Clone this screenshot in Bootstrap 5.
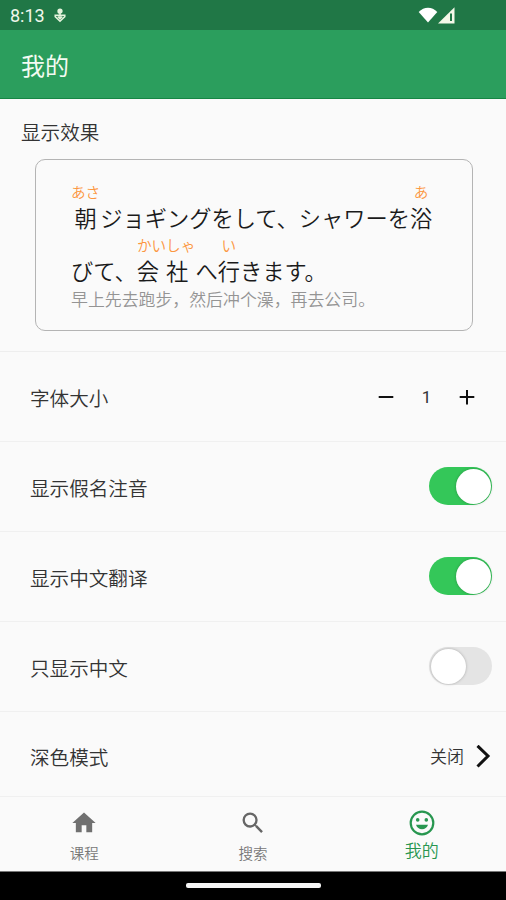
<!DOCTYPE html>
<html lang="zh-CN">
<head>
<meta charset="utf-8">
<meta name="viewport" content="width=device-width, initial-scale=1">
<title>我的</title>
<link href="https://cdn.jsdelivr.net/npm/bootstrap@5.3.0/dist/css/bootstrap.min.css" rel="stylesheet">
<style>
  body { background: #fafafa; color: #333; font-family: Roboto, "Noto Sans CJK SC", sans-serif; font-size: 19.6px; line-height: 1; font-weight: 350; overflow: hidden; }
  svg { display: block; flex: none; }
  .status { height: 30px; background: #207746; color: #f1f8ec; font-size: 18px; font-weight: 400; padding: 2px 49px 0 10px; }
  .appbar { height: 69px; background: #2b9e5d; border-bottom: 1px solid #168644; color: #f4fbf2; font-size: 24px; font-weight: 400; padding: 6px 21px 0; }
  .preview { height: 253px; padding: 25px 33px 0 21px; border-bottom: 1px solid #eee; }
  .sample { height: 172px; margin: 15px 0 0 14px; border: 1.5px solid #b4b4b4; border-radius: 10px; padding: 23px 0 0 35px; }
  .jp { font-family: "Noto Sans CJK JP", sans-serif; font-size: 22.25px; color: #1a1a1a; height: 52.7px; white-space: nowrap; }
  .kana { font-size: 14.6px; height: 15px; line-height: 15px; color: #fc9640; }
  .base { height: 36px; line-height: 36px; }
  .spread { letter-spacing: 7.2px; }
  .zh { font-size: 16.9px; color: #949494; line-height: 20px; margin-top: 2px; white-space: nowrap; }
  .setting { height: 90px; border-bottom: 1px solid #f0f0f0; padding: 2px 14px 0 30px; }
  .setting.last { height: 85px; padding-top: 5px; }
  .label { padding-top: 4px; }
  .stepper { padding-right: 17px; }
  .count { font-size: 17px; width: 65px; text-align: center; font-weight: 400; }
  .toggle { width: 63px; height: 38px; border-radius: 19px; background: #e4e4e4; padding: 1.5px; margin-top: -3px; }
  .toggle.on { background: #34c759; justify-content: end; }
  .knob { width: 35px; height: 35px; border-radius: 50%; background: #fff; box-shadow: 0 0 3px #0004; }
  .state { font-size: 17px; padding-top: 2px; }
  .tabs { height: 75px; color: #777; font-size: 14.5px; border-bottom: 1px solid #777; padding-top: 13px; }
  .tab-label { line-height: 18px; margin-top: 8px; padding-top: 3px; }
  .wide-icon { margin-top: -1px; margin-bottom: -2px; }
  .current { color: #27964f; }
  .current .tab-label { font-size: 17px; margin-top: 3px; }
  .gesture { height: 29px; background: #000; }
  .pill { width: 135px; height: 5px; border-radius: 2px; background: #f5f5f5; margin-top: -2px; }
</style>
<script src="https://cdn.jsdelivr.net/npm/bootstrap@5.3.0/dist/js/bootstrap.bundle.min.js"></script>
</head>
<body>
<div class="status d-flex align-items-center">
  <span>8:13</span>
  <svg class="ms-2" width="14" height="16" viewBox="0 0 14 16" fill="none" stroke="#e4f3dc" stroke-width="1.5"><circle cx="7" cy="3.2" r="1.9" fill="#e4f3dc"/><path d="M2.200 7.300h9.600v1.300L7 13.200 2.200 8.600zM7 5v5M4.800 8.500 7 10.700l2.200-2.200"/></svg>
  <svg class="ms-auto" width="39" height="18" viewBox="0 0 39 18" fill="#fff"><path d="M.7 5C6-.7 14-.7 19.300 5L10 15.500z"/><path fill="#f4f8e8" d="M20 16.500 36.500.2V16.500z"/><path d="M33 6.500V14" stroke="#207746" stroke-width="2"/></svg>
</div>
<header class="appbar d-flex align-items-center">我的</header>
<main>
  <section class="preview">
    <div>显示效果</div>
    <div class="sample">
      <div class="jp d-flex align-items-end" lang="ja">
        <div class="d-flex flex-column align-items-center"><span class="kana">あさ</span><span class="base">朝</span></div>
        <span class="base">ジョギングをして、シャワーを</span>
        <div class="d-flex flex-column align-items-center"><span class="kana">あ</span><span class="base">浴</span></div>
      </div>
      <div class="jp d-flex align-items-end" lang="ja">
        <span class="base">びて、</span>
        <div class="d-flex flex-column align-items-center"><span class="kana">かいしゃ</span><span class="base spread">会社</span></div>
        <span class="base">へ</span>
        <div class="d-flex flex-column align-items-center"><span class="kana">い</span><span class="base">行</span></div>
        <span class="base">きます。</span>
      </div>
      <div class="zh">早上先去跑步，然后冲个澡，再去公司。</div>
    </div>
  </section>
  <div class="setting d-flex align-items-center justify-content-between">
    <span class="label">字体大小</span>
    <div class="stepper d-flex align-items-center">
      <svg width="16" height="16" viewBox="0 0 16 16" stroke="#111" stroke-width="2"><path d="M.7 7h14.600"/></svg>
      <span class="count">1</span>
      <svg width="16" height="16" viewBox="0 0 16 16" stroke="#111" stroke-width="2"><path d="M.7 7h14.600M8 0v14.500"/></svg>
    </div>
  </div>
  <div class="setting d-flex align-items-center justify-content-between"><span class="label">显示假名注音</span><div class="toggle on d-flex"><div class="knob"></div></div></div>
  <div class="setting d-flex align-items-center justify-content-between"><span class="label">显示中文翻译</span><div class="toggle on d-flex"><div class="knob"></div></div></div>
  <div class="setting d-flex align-items-center justify-content-between"><span class="label">只显示中文</span><div class="toggle d-flex"><div class="knob"></div></div></div>
  <div class="setting last d-flex align-items-center justify-content-between">
    <span class="label">深色模式</span>
    <div class="d-flex align-items-center">
      <span class="state">关闭</span>
      <svg class="ms-2" width="20" height="24" viewBox="0 0 20 24" fill="none" stroke="#111" stroke-width="3"><path d="M5.500.8 16 11 5.500 21.500"/></svg>
    </div>
  </div>
</main>
<nav class="tabs row g-0 text-center">
  <div class="col d-flex flex-column align-items-center">
    <svg class="wide-icon" width="28" height="28" viewBox="0 0 24 24" fill="#707070"><path d="M10 20v-6h4v6h5v-8h3L12 3 2 12h3v8z"/></svg>
    <span class="tab-label">课程</span>
  </div>
  <div class="col d-flex flex-column align-items-center">
    <svg class="wide-icon" width="28" height="28" viewBox="0 0 24 24" fill="#666"><path d="M15.500 14h-.79l-.28-.27A6.470 6.470 0 0 0 16 9.500 6.500 6.500 0 1 0 9.500 16c1.610 0 3.090-.59 4.230-1.570l.27.28v.79l5 4.990L20.490 19zm-6 0a4.500 4.500 0 1 1 0-9 4.500 4.500 0 0 1 0 9z"/></svg>
    <span class="tab-label">搜索</span>
  </div>
  <div class="col d-flex flex-column align-items-center current">
    <svg width="26" height="26" viewBox="0 0 26 26" fill="#27964f"><circle cx="13" cy="13" r="11.300" fill="none" stroke="#27964f" stroke-width="2.200"/><circle cx="8.700" cy="9.900" r="1.800"/><circle cx="17.300" cy="9.900" r="1.800"/><path d="M7 14.700h12c-.9 2.800-3.200 4.500-6 4.500s-5.100-1.700-6-4.500z"/></svg>
    <span class="tab-label">我的</span>
  </div>
</nav>
<footer class="gesture d-flex align-items-center justify-content-center"><div class="pill"></div></footer>
</body>
</html>
